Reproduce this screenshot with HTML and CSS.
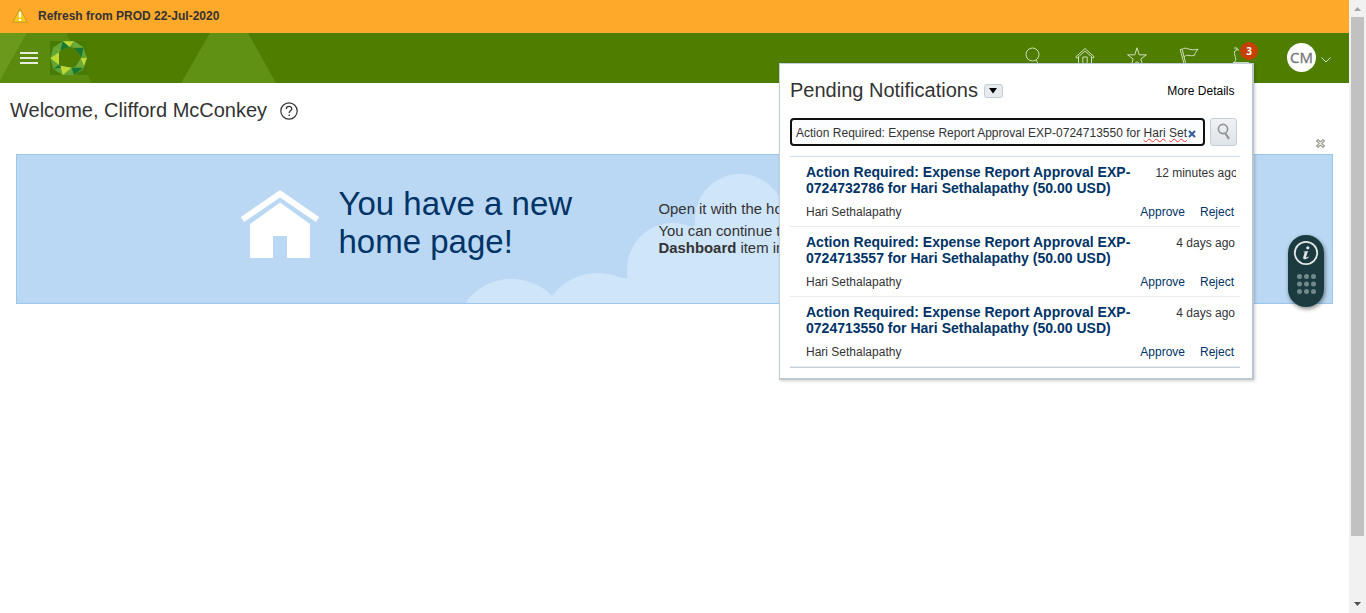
FILE: index.html
```html
<!DOCTYPE html>
<html lang="en">
<head>
<meta charset="utf-8">
<title>Welcome</title>
<link rel="stylesheet" href="styles.css">
</head>
<body>
<div class="page">
  <div class="alert">
    <svg class="warn" width="16" height="15" viewBox="0 0 16 15"><path d="M8 .7 15.4 14.3H.6Z" fill="#f8c818" stroke="#c39a2c" stroke-linejoin="round"/><path d="M8 4v5.5M8 11v2" stroke="#fff" stroke-width="2.2"/></svg>
    <span class="alert-text">Refresh from PROD 22-Jul-2020</span>
  </div>
  <header class="topbar">
    <svg class="pattern" width="300" height="50" viewBox="0 0 300 50"><path d="M0 0H27L0 48Z" fill="#6a991b"/><path d="M27 0H66L92 50H0V48Z" fill="#5a8b0f"/><path d="M210 0H248L276 50H181Z" fill="#619114"/></svg>
    <svg class="menu" width="18" height="14" viewBox="0 0 18 14"><path d="M0 2h18M0 7h18M0 12h18" stroke="#e6eedb" stroke-width="2"/></svg>
    <svg class="logo" width="37" height="34" viewBox="0 0 111 102">
      <rect width="111" height="102" fill="#487b06"/>
      <path d="M38 1H72L100 19 111 51 100 85 72 102H38L10 84 1 51 10 19Z" fill="#62a436"/>
      <path d="M27 34 34 25 58 18 73 20 95 47 92 52 78 76 65 80 32 74 27 71Z" fill="#4e7d02"/>
      <path d="M38 1H72L58 18ZM1 52 27 34V71ZM92 52 111 50 102 76ZM32 74 65 80 38 102Z" fill="#bdd832"/>
      <path d="M38 1 58 18 32 27ZM71 20 100 20 95 47ZM72 102 65 80 100 80ZM10 84 27 71 33 80Z" fill="#187834"/>
      <path d="M72 1 100 19 69 20ZM10 19 32 27 27 34ZM78 76 92 54 101 82Z" fill="#70aa36"/>
    </svg>
    <div class="tools">
      <svg width="20" height="20" viewBox="0 0 20 20"><circle cx="9.500" cy="7.500" r="6.500"/><path d="m13 13 3 5"/></svg>
      <svg width="20" height="20" viewBox="0 0 20 20"><path d="M.7 10 10 1.500l9.300 8.500-1.200 1.200L10 4 1.900 11.200ZM3.500 10v9M16.500 10v9M7.800 19v-9h4.400v9"/></svg>
      <svg width="20" height="20" viewBox="0 0 20 20"><path d="m10 .8 2.200 7H19.400L13.800 12l2.100 7L10 14.800 4.100 19l2.100-7L.6 7.800h7.200Z"/></svg>
      <svg width="20" height="20" viewBox="0 0 20 20"><path d="m1.200 2.500 4.300 16M3.200 2.200C7-1 10 4.500 19 2.200c-2 2.500-3 4-3.500 6C11 10 8.500 6.500 5 9.800M3.200 2.200 7 18M1.200 2.500l2-.3"/></svg>
      <svg width="20" height="20" viewBox="0 0 20 20"><path d="M2.500 16c4.500-3 .5-7 1-11C4 3 5.500 2.500 8 3M3 1h3v2M2 15.500h16"/></svg>
      <span class="badge">3</span>
    </div>
    <div class="user">CM</div>
    <svg class="caret" width="10" height="6" viewBox="0 0 10 6"><path d="m.5.5 4.500 4.500L9.500.5" fill="none" stroke="#d0dfbf"/></svg>
  </header>
  <main>
    <div class="welcome">
      <h1>Welcome, Clifford McConkey</h1>
      <svg class="help" width="18" height="18" viewBox="0 0 18 18" fill="none" stroke="#333" stroke-width="1.200"><circle cx="9" cy="9" r="8.200"/><path d="M6.300 7c0-3.600 5.500-3.500 5.500-.3C11.800 8.700 9.200 8.400 9.200 11M9.200 12.500v1.500" stroke-width="1.300"/></svg>
    </div>
    <div class="dismiss"><svg width="9" height="9" viewBox="0 0 9 9"><path d="M2 .5.5 2 3 4.500.5 7 2 8.500 4.500 6 7 8.500 8.500 7 6 4.500 8.500 2 7 .5 4.500 3Z" fill="#eee9dc" stroke="#555" stroke-width=".9"/></svg></div>
    <section class="banner">
      <svg class="clouds" width="450" height="148" viewBox="467 155 450 148"><g fill="#cfe5fa"><circle cx="511.500" cy="336" r="57"/><circle cx="598" cy="331" r="58"/><circle cx="673" cy="269" r="46"/><circle cx="740" cy="219" r="45"/><path d="M598 278H630L695 225H780V304H598Z"/></g></svg>
      <svg class="house" width="78" height="69" viewBox="0 0 78 69" fill="#fff"><path d="M39 0 78 27 75 32 39 7.500 3 32 0 27Z"/><path d="M39 12.500 69 34V68H46V46H32V68H9V34Z"/></svg>
      <h2>You have a new<br>home page!</h2>
      <div class="copy"><p>Open it with the home icon.</p><p>You can continue to use the<br><b>Dashboard</b> item in the menu.</p></div>
    </section>
  </main>
</div>
<div class="scrollbar">
  <svg width="17" height="17" viewBox="0 0 17 17"><path d="M5 11 8.500 7 12 11Z" fill="#a3a3a3"/></svg>
  <div class="thumb"></div>
  <svg class="down" width="17" height="17" viewBox="0 0 17 17"><path d="M5 6 8.500 10 12 6Z" fill="#505050"/></svg>
</div>

<aside class="popup">
  <div class="pop-head"><h3>Pending Notifications</h3><span class="drop"><svg width="8" height="6" viewBox="0 0 8 6"><path d="M0 0H8L4 5.500Z"/></svg></span><a class="more">More Details</a></div>
  <div class="search">
    <div class="field"><span>Action Required: Expense Report Approval EXP-0724713550 for <u>Hari</u> <u>Set</u></span><svg width="8" height="8" viewBox="0 0 8 8"><path d="m1 1 6 6M7 1 1 7" stroke="#355c9c" stroke-width="2"/></svg></div>
    <div class="go"><svg width="16" height="20" viewBox="0 0 16 20" fill="none" stroke="#929292"><circle cx="7" cy="7" r="4.600" stroke-width="1.600"/><path d="m9.500 11.500 3.500 5.500" stroke-width="2.200"/></svg></div>
  </div>
  <div class="list">
    <article><div class="row"><a class="title">Action Required: Expense Report Approval EXP-<br>0724732786 for Hari Sethalapathy (50.00 USD)</a><span class="time clipped">12 minutes ago</span></div><div class="row foot"><span>Hari Sethalapathy</span><span class="actions"><a>Approve</a><a>Reject</a></span></div></article>
    <article><div class="row"><a class="title">Action Required: Expense Report Approval EXP-<br>0724713557 for Hari Sethalapathy (50.00 USD)</a><span class="time">4 days ago</span></div><div class="row foot"><span>Hari Sethalapathy</span><span class="actions"><a>Approve</a><a>Reject</a></span></div></article>
    <article><div class="row"><a class="title">Action Required: Expense Report Approval EXP-<br>0724713550 for Hari Sethalapathy (50.00 USD)</a><span class="time">4 days ago</span></div><div class="row foot"><span>Hari Sethalapathy</span><span class="actions"><a>Approve</a><a>Reject</a></span></div></article>
  </div>
</aside>
<div class="dock">
  <svg width="36" height="72" viewBox="0 0 36 72"><circle cx="18" cy="18" r="11.200" fill="none" stroke="#e3e8e7" stroke-width="1.800"/><g fill="#e3e8e7"><circle cx="19.800" cy="12.800" r="1.600"/><path d="M15 16.800 20 16 17.800 22.800 20.700 21.500 20.400 22.500C18 25 14.500 25 15.300 22L16.700 17.600Z"/></g><g fill="#71898a"><circle cx="11.500" cy="41.500" r="2.500"/><circle cx="18.500" cy="41.500" r="2.500"/><circle cx="25.500" cy="41.500" r="2.500"/><circle cx="11.500" cy="49" r="2.500"/><circle cx="18.500" cy="49" r="2.500"/><circle cx="25.500" cy="49" r="2.500"/><circle cx="11.500" cy="56.500" r="2.500"/><circle cx="18.500" cy="56.500" r="2.500"/><circle cx="25.500" cy="56.500" r="2.500"/></g></svg>
</div>
</body>
</html>
```
FILE: styles.css
```css
* { box-sizing: border-box; }
body { margin: 0; height: 613px; display: flex; overflow: hidden; font: 12px "Liberation Sans", Arial, sans-serif; color: #333; background: #fff; }
h1, h2, h3, p { margin: 0; font-weight: 400; }
svg { display: block; flex: none; }
.page { width: 1349px; flex: none; }
.alert { height: 33px; background: #ffa92b; display: flex; align-items: flex-start; padding: 8px 0 0 12px; }
.alert-text { margin-left: 10px; font-weight: 700; line-height: 16px; white-space: nowrap; }
.topbar { position: relative; height: 50px; background: #4e7d00; display: flex; align-items: center; padding-left: 20px; }
.pattern { position: absolute; left: 0; top: 0; }
.menu { position: relative; }
.logo { position: relative; margin-left: 12px; }
.tools { position: relative; display: flex; gap: 32px; margin-left: 936px; margin-top: -2px; fill: none; stroke: #d0dfbf; stroke-width: 1; }
.badge { position: absolute; left: 217px; top: -5px; width: 18px; height: 18px; border-radius: 9px; background: #c74003; color: #fff; font: 700 10px/18px "Open Sans", sans-serif; text-align: center; }
.user { width: 29px; height: 29px; margin: -1px 0 0 36px; border-radius: 50%; background: #fff; color: #757575; font: 400 15px/29px "Open Sans", sans-serif; text-align: center; -webkit-text-stroke: .3px #757575; }
.caret { margin-left: 5px; margin-top: 3px; }
.welcome { display: flex; height: 55px; padding: 15px 0 0 10px; }
h1 { font-size: 20px; line-height: 24px; white-space: nowrap; }
.help { margin: 4px 0 0 12.5px; }
.dismiss { height: 16px; display: flex; justify-content: flex-end; padding: 1px 24px 0 0; }
.banner { position: relative; width: 1317px; height: 150px; margin-left: 16px; border: 1px solid #9cc6ea; background: #bad8f3; display: flex; }
.clouds { position: absolute; left: 450px; top: 0; }
.house { position: relative; margin: 35px 0 0 224px; }
h2 { position: relative; width: 320px; margin: 30px 0 0 19.5px; font-size: 33px; line-height: 38px; color: #003366; white-space: nowrap; }
.copy { position: relative; padding-top: 46px; font-size: 14.9px; line-height: 17px; white-space: nowrap; }
.copy p + p { margin-top: 5px; }
.scrollbar { width: 17px; background: #f1f1f1; display: flex; flex-direction: column; }
.thumb { width: 13px; height: 519px; margin-left: 2px; background: #c1c1c1; }
.down { margin-top: auto; }
.popup { position: absolute; left: 779px; top: 63px; width: 475px; height: 317px; padding: 0 13px 0 10px; background: #fff; border: 1px solid #c1cedb; border-right: 2px solid #b9c5cf; border-bottom: 2px solid #bdc8d1; box-shadow: 1px 1px 3px #0003; }
.pop-head { display: flex; height: 54px; align-items: center; }
h3 { margin-top: -2px; font-size: 20px; line-height: 24px; white-space: nowrap; }
.drop { width: 19px; height: 14px; margin: -1px 0 0 6px; border: 1px solid #c4ced7; border-radius: 3px; background: #e7ebee; display: grid; place-items: center; }
.more { margin-left: auto; padding-right: 4.5px; color: #000; white-space: nowrap; }
.search { display: flex; gap: 5px; height: 39px; width: 450px; border-bottom: 1px solid #d6dfe6; }
.field { width: 415px; height: 28px; border: 2px solid #101010; border-radius: 4px; background: #fcfdff; display: flex; align-items: center; padding: 1px 0 0 4px; white-space: nowrap; letter-spacing: .012px; }
.field svg { margin: 3px 0 0 1px; }
.field u { text-decoration: underline wavy #e33 .7px; text-underline-offset: 1px; text-decoration-skip-ink: none; }
.go { width: 27px; height: 28px; border: 1px solid #c4ced7; border-radius: 3px; background: linear-gradient(#f0f2f4, #dfe4e8); display: grid; place-items: center; }
.list { width: 450px; border-bottom: 1px solid #c8d1d9; }
article { height: 70px; padding: 7px 6px 0 16px; border-bottom: 1px solid #e8ebed; }
.row { display: flex; justify-content: space-between; white-space: nowrap; }
.title { font-size: 14px; line-height: 16px; font-weight: 700; color: #003366; letter-spacing: .01px; }
.time { line-height: 17px; padding-top: 1px; margin-right: -1px; }
.clipped { width: 80px; margin-right: -1.5px; overflow: hidden; }
.foot { margin-top: 8px; line-height: 17px; }
.actions { display: flex; gap: 15px; color: #003366; }
.dock { position: absolute; left: 1288px; top: 235px; width: 36px; height: 72px; border-radius: 18px; background: #1c3b40; box-shadow: 1px 2px 4px #0007; }
```
